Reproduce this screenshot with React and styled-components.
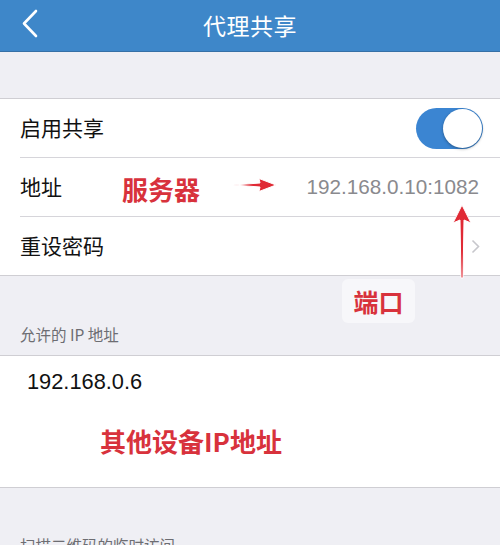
import React from "react";
import styled, { createGlobalStyle } from "styled-components";

const GlobalStyle = createGlobalStyle`
  html, body {
    margin: 0;
    padding: 0;
    background: #efeff4;
  }
  body {
    font-family: "Liberation Sans", "Noto Sans CJK SC", sans-serif;
    -webkit-font-smoothing: antialiased;
  }
`;

const Page = styled.div`
  position: relative;
  width: 500px;
  height: 545px;
  overflow: hidden;
  background: #efeff4;
`;

const NavBar = styled.div`
  height: 51px;
  background: #3e87c9;
  border-bottom: 1px solid #3670a6;
  display: flex;
  align-items: center;
  justify-content: center;
  position: relative;
`;

const BackButton = styled.div`
  position: absolute;
  left: 20px;
  top: 9px;
  width: 20px;
  height: 30px;
  display: flex;
`;

const Title = styled.div`
  color: #fff;
  font-family: "Noto Sans CJK SC", sans-serif;
  font-size: 23px;
  letter-spacing: 0.5px;
  margin-top: -2px;
`;

const Gap = styled.div`
  height: ${(p) => p.h}px;
  display: flex;
  align-items: ${(p) => (p.top ? "flex-start" : "flex-end")};
  padding: 0 20px;
  box-sizing: border-box;
`;

const GapLabel = styled.div`
  color: #6d6d72;
  font-family: "Noto Sans CJK SC", sans-serif;
  font-size: 15.5px;
  line-height: 20px;
  padding-bottom: ${(p) => p.pb || 0}px;
  padding-top: ${(p) => p.pt || 0}px;
`;

const Group = styled.div`
  background: #fff;
  border-top: 1px solid #cfced3;
  border-bottom: 1px solid #cfced3;
`;

const Row = styled.div`
  height: 58px;
  display: flex;
  align-items: center;
  padding-right: 17px;
  margin-left: 20px;
  border-bottom: ${(p) => (p.last ? "none" : "1px solid #d6d5da")};
`;

const Label = styled.div`
  font-family: "Noto Sans CJK SC", sans-serif;
  font-size: 21px;
  color: #111;
  margin-top: -2px;
`;

const Value = styled.div`
  margin-left: auto;
  font-size: 20.7px;
  color: #8a8a8e;
  padding-right: 4px;
`;

const Note = styled.div`
  color: #d8323c;
  font-family: "Noto Sans CJK SC", sans-serif;
  font-weight: 700;
  font-size: ${(p) => p.size || 26}px;
  margin-left: ${(p) => p.ml || 0}px;
  margin-top: ${(p) => p.mt || 0}px;
  line-height: 1;
`;

const Switch = styled.div`
  margin-left: auto;
  width: 67px;
  height: 41px;
  border-radius: 21px;
  background: #3b85d2;
  display: flex;
  align-items: center;
  justify-content: flex-end;
  padding: 0 1px;
  box-sizing: border-box;
  margin-top: 1px;
`;

const Knob = styled.div`
  width: 39px;
  height: 39px;
  border-radius: 50%;
  background: #fff;
  box-shadow: 0 1px 3px rgba(0, 0, 0, 0.35);
`;

const Chevron = styled.div`
  margin-left: auto;
  display: flex;
  padding-right: 3px;
`;

const IpBlock = styled.div`
  height: 131px;
  display: flex;
  flex-direction: column;
  padding-left: 27px;
`;

const IpText = styled.div`
  font-size: 21.8px;
  color: #111;
  margin-top: 13px;
`;

const IpNote = styled(Note)`
  margin-top: 33px;
  margin-left: 73px;
`;

const UpArrow = styled.div`
  position: absolute;
  left: 451px;
  top: 204px;
  width: 22px;
  height: 76px;
`;

const PortTag = styled.div`
  position: absolute;
  left: 342px;
  top: 279px;
  width: 73px;
  height: 44px;
  border-radius: 6px;
  background: #f7f7fa;
  display: flex;
  align-items: center;
  justify-content: center;
`;

const RightArrow = () => (
  <svg width="46" height="16" viewBox="0 0 46 16" style={{ marginLeft: 32, marginTop: -4 }}>
    <path
      d="M1 8 L28 6 L27 1.5 L44 8 L27 14.5 L28 10 Z"
      fill="#e02a35"
      stroke="#fff"
      strokeWidth="1"
      strokeLinejoin="round"
    />
  </svg>
);

export default function App() {
  return (
    <>
      <GlobalStyle />
      <Page>
        <NavBar>
          <BackButton>
            <svg width="20" height="30" viewBox="0 0 20 30">
              <path d="M16 2 L4 14.5 L16 27" fill="none" stroke="#fff" strokeWidth="2.6" strokeLinecap="round" strokeLinejoin="round" />
            </svg>
          </BackButton>
          <Title>代理共享</Title>
        </NavBar>

        <Gap h={46} />
        <Group>
          <Row>
            <Label>启用共享</Label>
            <Switch>
              <Knob />
            </Switch>
          </Row>
          <Row>
            <Label>地址</Label>
            <Note ml={60} mt={3}>服务器</Note>
            <RightArrow />
            <Value>192.168.0.10:1082</Value>
          </Row>
          <Row last>
            <Label>重设密码</Label>
            <Chevron>
              <svg width="9" height="15" viewBox="0 0 9 15">
                <path d="M1.5 1.5 L7.5 7.5 L1.5 13.5" fill="none" stroke="#c7c7cc" strokeWidth="1.6" />
              </svg>
            </Chevron>
          </Row>
        </Group>

        <Gap h={79}>
          <GapLabel pb={11}>允许的 IP 地址</GapLabel>
        </Gap>
        <Group>
          <IpBlock>
            <IpText>192.168.0.6</IpText>
            <IpNote>其他设备IP地址</IpNote>
          </IpBlock>
        </Group>

        <Gap h={60} top>
          <GapLabel pt={47}>扫描二维码的临时访问</GapLabel>
        </Gap>

        <UpArrow>
          <svg width="22" height="76" viewBox="0 0 22 76">
            <path
              d="M11 1 L20 19 L13 16 L12 74 L10 74 L9 16 L2 19 Z"
              fill="#e02a35"
              stroke="#fff"
              strokeWidth="1"
              strokeLinejoin="round"
            />
          </svg>
        </UpArrow>
        <PortTag>
          <Note size={25}>端口</Note>
        </PortTag>
      </Page>
    </>
  );
}
